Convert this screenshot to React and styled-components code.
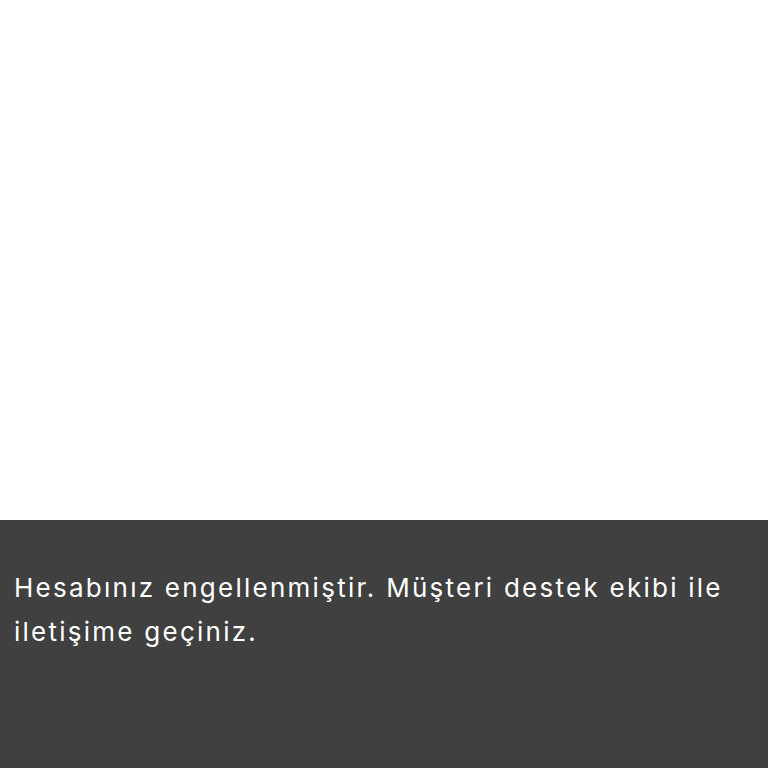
import React from 'react';
import styled, { createGlobalStyle } from 'styled-components';

const GlobalStyle = createGlobalStyle`
  html, body {
    margin: 0;
    padding: 0;
    background: #fff;
  }
  #root {
    min-height: 100vh;
  }
`;

const Screen = styled.div`
  display: flex;
  flex-direction: column;
  height: 100vh;
  background: #fff;
`;

const Blank = styled.div`
  flex: 1;
`;

const Banner = styled.div`
  height: 248px;
  box-sizing: border-box;
  background-color: #404040;
  padding: 46px 14px 0;
`;

const Message = styled.p`
  margin: 0;
  color: #fff;
  font-family: Inter, 'Noto Sans', sans-serif;
  font-size: 26px;
  line-height: 44px;
  letter-spacing: 2.25px;
`;

export default function App() {
  return (
    <>
      <GlobalStyle />
      <Screen>
        <Blank />
        <Banner>
          <Message>
            Hesabınız engellenmiştir. Müşteri destek ekibi ile iletişime geçiniz.
          </Message>
        </Banner>
      </Screen>
    </>
  );
}
